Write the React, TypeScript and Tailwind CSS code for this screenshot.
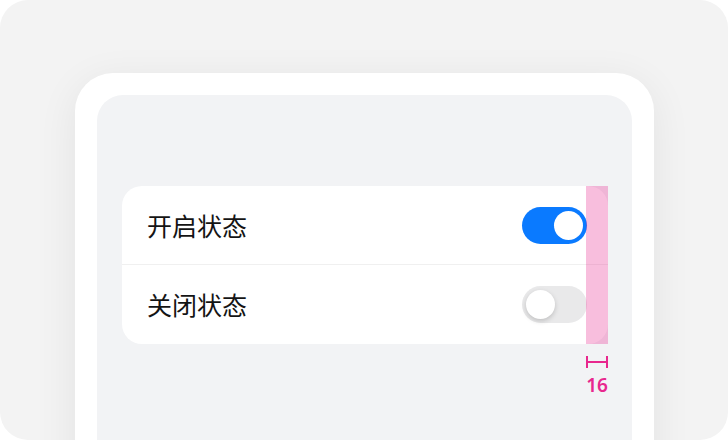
import React from "react";

const rows = [
  { id: "on", label: "开启状态", checked: true },
  { id: "off", label: "关闭状态", checked: false },
];

const Switch: React.FC<{ checked: boolean }> = ({ checked }) => {
  return (
    <div
      className={
        checked
          ? "flex h-[37px] w-[65px] items-center justify-end rounded-full bg-[#0a7aff] px-[4px]"
          : "flex h-[37px] w-[65px] items-center justify-start rounded-full bg-[#e9e9ea] px-[4px]"
      }
    >
      <div
        className={
          checked
            ? "h-[29px] w-[29px] rounded-full bg-white"
            : "h-[29px] w-[29px] rounded-full bg-white shadow-[0_2px_5px_rgba(0,0,0,0.18)]"
        }
      />
    </div>
  );
};

export default function App() {
  return (
    <div className="flex h-[440px] w-[728px] overflow-hidden rounded-[28px] bg-[#f3f3f3] pl-[75px] pt-[73px]">
      {/* phone frame */}
      <div className="flex h-[420px] w-[579px] flex-col rounded-t-[38px] bg-white px-[22px] pt-[22px] shadow-[0_8px_40px_rgba(0,0,0,0.07)]">
        <div className="flex-1 rounded-t-[26px] bg-[#f2f3f5] pl-[25px] pr-[24px] pt-[91px]">
          <div className="relative">
            <div className="overflow-hidden rounded-[20px] bg-white">
              {rows.map((row, index) => (
                <div
                  key={row.id}
                  className={
                    index === 0
                      ? "flex h-[79px] items-center justify-between border-b border-[#f0f0f0] pl-[25px] pr-[21px]"
                      : "flex h-[79px] items-center justify-between pl-[25px] pr-[21px]"
                  }
                >
                  <span className="text-[25px] leading-none text-[#141414] [font-family:'Noto_Sans_CJK_SC',sans-serif]">
                    {row.label}
                  </span>
                  <Switch checked={row.checked} />
                </div>
              ))}
            </div>

            {/* spacing overlay */}
            <div className="absolute right-0 top-0 bottom-0 w-[22px] bg-[#e8288e]/30" />
            <div className="absolute right-0 top-full mt-[12px] flex w-[22px] flex-col items-center">
              <div className="flex h-[12px] w-full items-center">
                <div className="h-full w-[2px] bg-[#e8288e]" />
                <div className="h-[2px] flex-1 bg-[#e8288e]" />
                <div className="h-full w-[2px] bg-[#e8288e]" />
              </div>
              <span className="mt-[8px] text-[19px] font-semibold leading-none text-[#e8288e] [font-family:'Noto_Sans',sans-serif]">
                16
              </span>
            </div>
          </div>
        </div>
      </div>
    </div>
  );
}
